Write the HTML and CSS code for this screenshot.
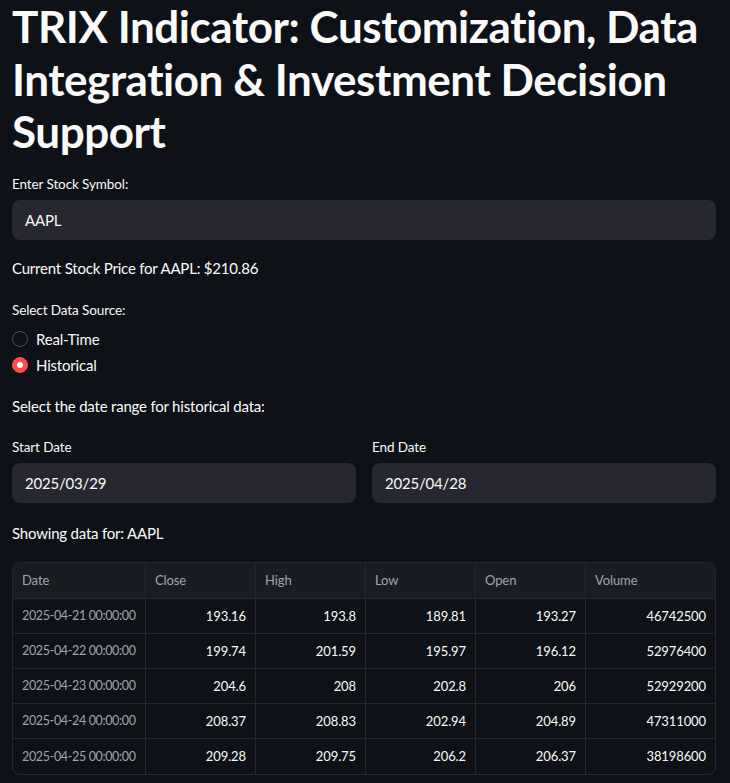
FILE: index.html
```html
<!DOCTYPE html>
<html lang="en">
<head>
<meta charset="utf-8">
<title>TRIX Indicator</title>
<link rel="stylesheet" href="styles.css">
</head>
<body>
<main class="main">
  <h1 class="title">TRIX Indicator: Customization, Data Integration &amp; Investment Decision Support</h1>

  <div class="field field-first">
    <div class="label">Enter Stock Symbol:</div>
    <div class="input">AAPL</div>
  </div>

  <p class="text price">Current Stock Price for AAPL: $210.86</p>

  <div class="field radio-field">
    <div class="label">Select Data Source:</div>
    <div class="radio-group">
      <div class="radio"><span class="dot"></span><span>Real-Time</span></div>
      <div class="radio"><span class="dot dot-on"></span><span>Historical</span></div>
    </div>
  </div>

  <p class="text range">Select the date range for historical data:</p>

  <div class="cols">
    <div class="field">
      <div class="label">Start Date</div>
      <div class="input">2025/03/29</div>
    </div>
    <div class="field">
      <div class="label">End Date</div>
      <div class="input">2025/04/28</div>
    </div>
  </div>

  <p class="text showing">Showing data for: AAPL</p>

  <div class="table">
    <div class="cell head">Date</div>
    <div class="cell head">Close</div>
    <div class="cell head">High</div>
    <div class="cell head">Low</div>
    <div class="cell head">Open</div>
    <div class="cell head last">Volume</div>

    <div class="cell idx">2025-04-21 00:00:00</div>
    <div class="cell num">193.16</div>
    <div class="cell num">193.8</div>
    <div class="cell num">189.81</div>
    <div class="cell num">193.27</div>
    <div class="cell num last">46742500</div>

    <div class="cell idx">2025-04-22 00:00:00</div>
    <div class="cell num">199.74</div>
    <div class="cell num">201.59</div>
    <div class="cell num">195.97</div>
    <div class="cell num">196.12</div>
    <div class="cell num last">52976400</div>

    <div class="cell idx">2025-04-23 00:00:00</div>
    <div class="cell num">204.6</div>
    <div class="cell num">208</div>
    <div class="cell num">202.8</div>
    <div class="cell num">206</div>
    <div class="cell num last">52929200</div>

    <div class="cell idx">2025-04-24 00:00:00</div>
    <div class="cell num">208.37</div>
    <div class="cell num">208.83</div>
    <div class="cell num">202.94</div>
    <div class="cell num">204.89</div>
    <div class="cell num last">47311000</div>

    <div class="cell idx bottom">2025-04-25 00:00:00</div>
    <div class="cell num bottom">209.28</div>
    <div class="cell num bottom">209.75</div>
    <div class="cell num bottom">206.2</div>
    <div class="cell num bottom">206.37</div>
    <div class="cell num last bottom">38198600</div>
  </div>
</main>
</body>
</html>
```
FILE: styles.css
```css
* { box-sizing: border-box; }
html, body {
  margin: 0;
  background: #0e1117;
}
body {
  color: #fafafa;
  font-family: "Lato", "Liberation Sans", sans-serif;
  font-size: 15px;
  letter-spacing: -0.2px;
}
.main {
  padding: 0 14px 0 12px;
  display: flex;
  flex-direction: column;
}
.title {
  margin: 0;
  font-size: 44px;
  line-height: 52.6px;
  font-weight: 700;
  letter-spacing: -0.45px;
}
.field {
  display: flex;
  flex-direction: column;
}
.field-first { margin-top: 16px; }
.label {
  font-size: 13.5px;
  line-height: 20px;
  margin-bottom: 6px;
  letter-spacing: -0.1px;
}
.input {
  height: 40px;
  background: #262730;
  border-radius: 8px;
  padding: 0 13px;
  display: flex;
  align-items: center;
}
.text {
  margin: 0;
  line-height: 24px;
}
.price { margin-top: 16px; }
.radio-field { margin-top: 20px; }
.radio {
  display: flex;
  align-items: center;
  height: 26px;
  gap: 8px;
}
.dot {
  width: 16px;
  height: 16px;
  border-radius: 50%;
  border: 1px solid #50535b;
  background: #0e1117;
  position: relative;
}
.dot-on {
  background: #ff4b4b;
  border-color: #ff4b4b;
}
.dot-on::after {
  content: "";
  position: absolute;
  left: 4px;
  top: 4px;
  width: 6px;
  height: 6px;
  border-radius: 50%;
  background: #ffffff;
}
.range { margin-top: 16px; }
.cols {
  margin-top: 19px;
  display: grid;
  grid-template-columns: 1fr 1fr;
  gap: 16px;
}
.showing { margin-top: 18px; }
.table {
  margin-top: 17px;
  display: grid;
  grid-template-columns: 133px 110px 110px 110px 110px 1fr;
  border: 1px solid #26282f;
  border-radius: 8px;
  overflow: hidden;
  font-size: 13px;
  letter-spacing: -0.1px;
}
.cell {
  height: 35px;
  padding: 0 9px;
  display: flex;
  align-items: center;
  white-space: nowrap;
  overflow: hidden;
  border-right: 1px solid #26282f;
  border-bottom: 1px solid #26282f;
}
.cell.last { border-right: none; }
.cell.bottom { border-bottom: none; }
.head {
  height: 36px;
  background: #1a1c23;
  color: #a1a4ac;
}
.idx {
  color: #a1a4ac;
  font-size: 12.5px;
  letter-spacing: -0.35px;
}
.num {
  justify-content: flex-end;
  color: #fafafa;
}
```
